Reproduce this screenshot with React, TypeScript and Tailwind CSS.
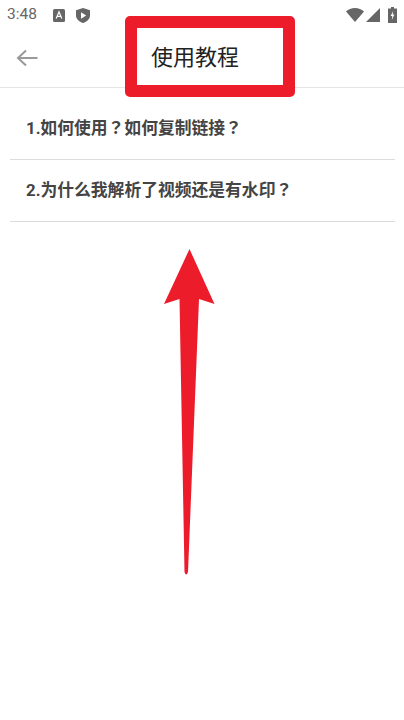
const font = "font-['Roboto','Noto_Sans_CJK_TC',sans-serif]";

const questions = ["1.如何使用？如何复制链接？", "2.为什么我解析了视频还是有水印？"];

const StatusBar = () => (
  <div className="flex h-[30px] items-center pl-[7px] pr-[7px] text-[#666]">
    <span className="text-[15.5px] leading-none">3:48</span>
    <svg width="12" height="13" viewBox="0 0 12 13" className="ml-[16px]">
      <rect width="12" height="13" rx="1.5" fill="#666" />
      <path d="M3.2 9.5 6 2.8l2.8 6.7M4.2 7.4h3.6" stroke="#fff" strokeWidth="1.2" fill="none" />
    </svg>
    <svg width="14" height="15" viewBox="0 0 14 15" className="ml-[11px]">
      <path d="M7 0 14 2.2V7.5C14 11 11 13.8 7 15 3 13.8 0 11 0 7.5V2.2Z" fill="#666" />
      <path d="M5 4.2 10.2 7.5 5 10.8Z" fill="#fff" />
    </svg>
    <div className="ml-auto flex items-center">
      <svg width="18" height="14" viewBox="0 0 18 14">
        <path d="M0 3.6C2.4 1.3 5.5 0 9 0s6.6 1.3 9 3.6L9 14Z" fill="#666" />
      </svg>
      <svg width="14" height="14" viewBox="0 0 14 14" className="ml-[2px]">
        <path d="M14 0V14H0Z" fill="#666" />
      </svg>
      <svg width="9" height="16" viewBox="0 0 9 16" className="ml-[8px]">
        <path d="M3 0H6V1.5H9V16H0V1.5H3Z" fill="#666" />
        <path d="M5.2 4 2.6 9H4.3L3.8 13 6.4 7.6H4.7Z" fill="#fff" />
      </svg>
    </div>
  </div>
);

export default function App() {
  return (
    <div className={`relative h-[720px] w-[404px] overflow-hidden bg-white ${font}`}>
      <StatusBar />

      <div className="flex h-[58px] items-center border-b border-[#e6e6e6] pb-[2px] pl-[16px]">
        <svg width="22" height="18" viewBox="0 0 22 18" fill="none" stroke="#999" strokeWidth="2">
          <path d="M21.5 9H2M10 1.5 2 9l8 7.5" />
        </svg>
        <h1 className="ml-[113px] text-[22px] font-normal leading-none text-[#222]">使用教程</h1>
      </div>

      <div className="pl-[10px] pr-[9px] pt-[10px]">
        {questions.map((q) => (
          <div
            key={q}
            className="flex h-[62px] items-center border-b border-[#dcdcdc] pl-[16px] text-[16.8px] font-bold text-[#444]"
          >
            {q}
          </div>
        ))}
      </div>

      {/* red annotation frame over the title */}
      <div className="absolute left-[125px] top-[16px] h-[81px] w-[170px] rounded-[5px] border-[12px] border-[#ed1c2b]" />

      {/* red annotation arrow */}
      <svg width="404" height="720" viewBox="0 0 404 720" className="absolute left-0 top-0">
        <path
          d="M189.5 249 214.5 304 199 299 188 572Q186 577 184.5 572L179.5 299 164 304Z"
          fill="#ed1c2b"
        />
      </svg>
    </div>
  );
}
